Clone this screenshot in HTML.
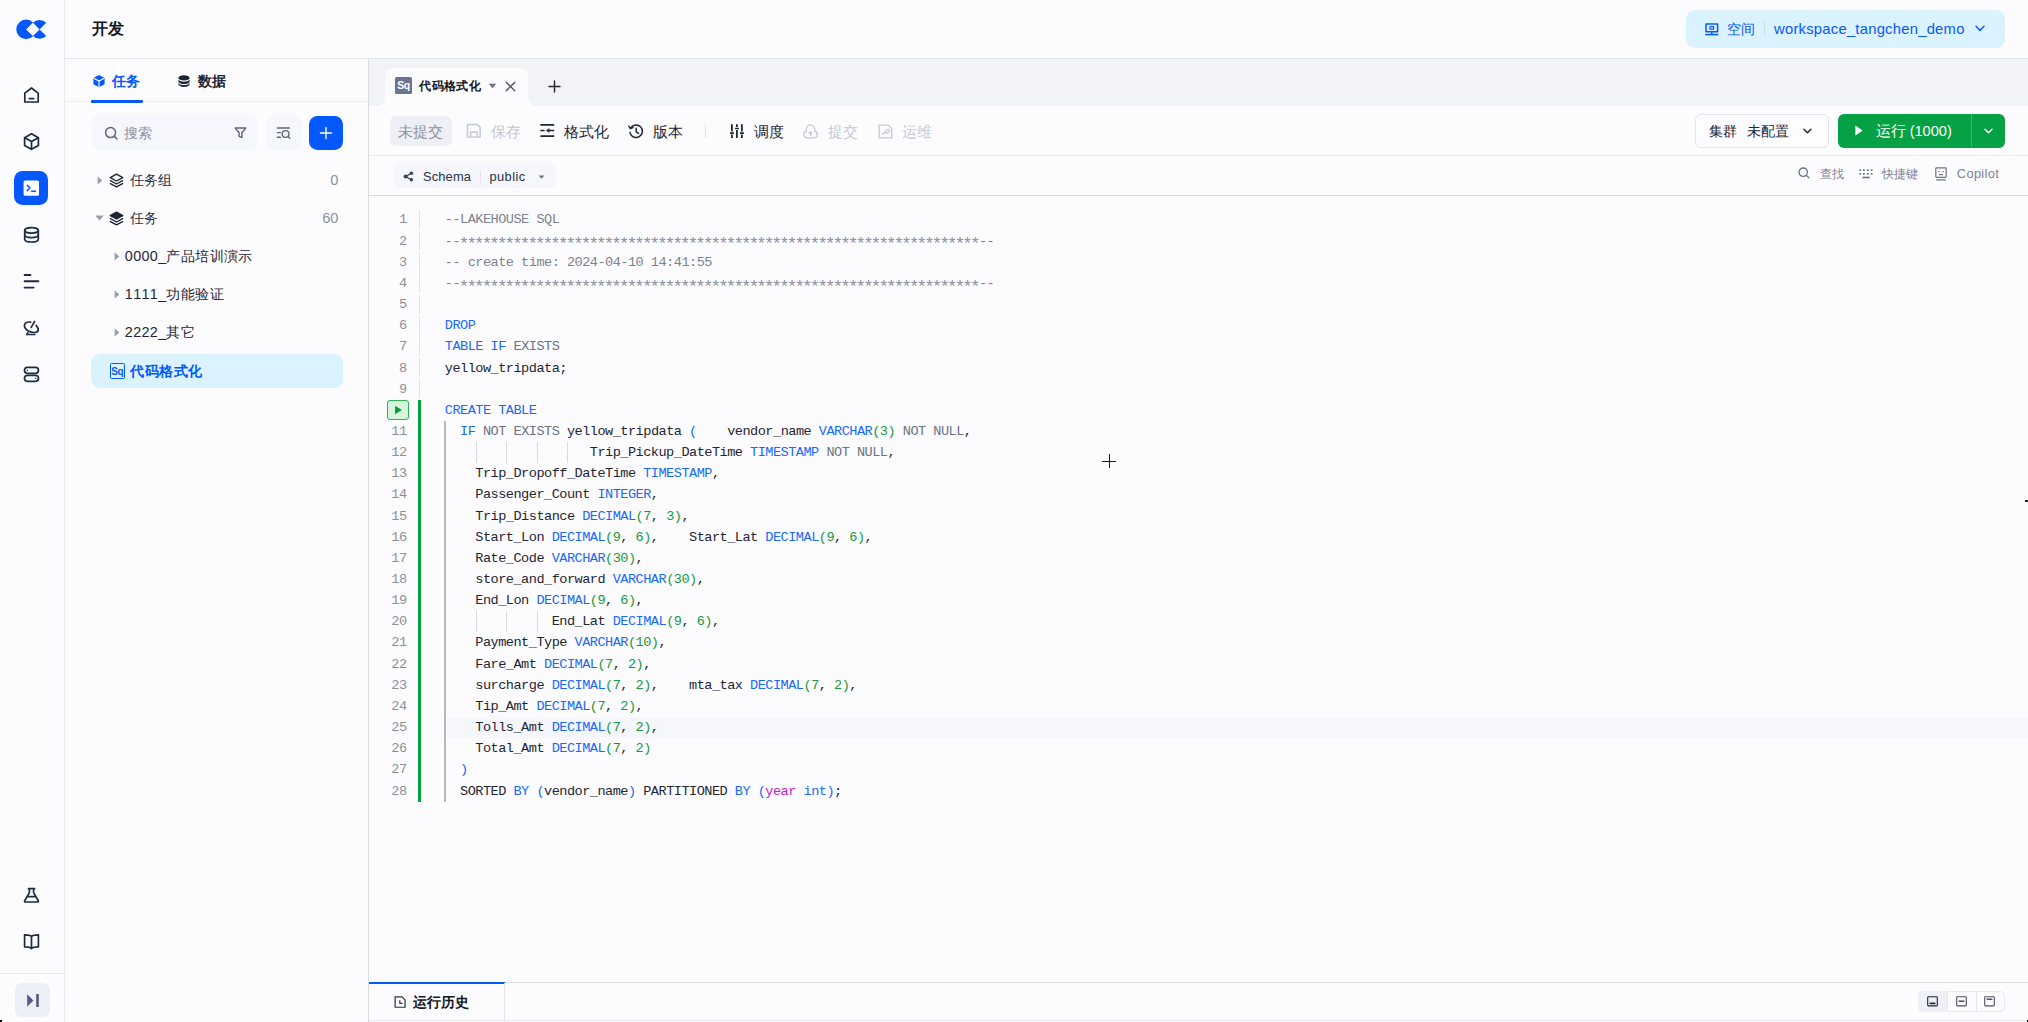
<!DOCTYPE html>
<html lang="zh">
<head>
<meta charset="utf-8">
<title>开发</title>
<style>
*{box-sizing:border-box;margin:0;padding:0}
html,body{width:2028px;height:1022px;overflow:hidden;background:#fcfcfe}
body{position:relative;font-kerning:none;font-family:"Liberation Sans",sans-serif;color:#1f2533;font-size:14.8px}
.abs{position:absolute}
.t{position:absolute;white-space:nowrap;line-height:20px;height:20px}
svg{position:absolute;overflow:visible}
.ln{position:absolute;margin-top:0.6px;left:380px;width:26.6px;text-align:right;font-family:"Liberation Mono",monospace;font-size:13.6px;letter-spacing:-0.526px;color:#8e9096;height:21.125px;line-height:21.125px}
.cl{position:absolute;margin-top:0.6px;left:444.8px;font-family:"Liberation Mono",monospace;font-size:13.6px;letter-spacing:-0.526px;white-space:pre;height:21.125px;line-height:21.125px;color:#1f2533}
.a{color:#8b919e;position:relative;margin-left:-1.3px;margin-right:1.3px;top:4.6px;font-size:17.4px;line-height:0;letter-spacing:-2.806px}.k{color:#1668ff}.c{color:#7c8290}.g{color:#6b7385}.n{color:#159a3c}.m{color:#c41cc8}
</style>
</head>
<body>
<!-- LEFT SIDEBAR -->
<div class="abs" style="left:64px;top:0;width:1px;height:1022px;background:#e6e8f2"></div>
<div class="abs" style="left:65px;top:58px;width:1963px;height:1px;background:#e3e4ea"></div>

<svg style="left:0;top:0" width="64" height="1022" viewBox="0 0 64 1022" fill="none" stroke="#1f2a44" stroke-width="1.7" stroke-linecap="round" stroke-linejoin="round">
<path d="M26.10 29.40L33.03 36.33A9.8 9.8 0 1 1 33.03 22.47ZM39.60 29.40L32.95 22.75A9.4 9.4 0 0 1 46.25 22.75ZM39.60 29.40L46.25 36.05A9.4 9.4 0 0 1 32.95 36.05Z" fill="#0558fc" stroke="none"/>
<!-- home -->
<path d="M24.8 93.2 L31.5 88 L38.2 93.2 V102 H24.8 Z"/><path d="M29.3 98.6h4.4"/>
<!-- cube -->
<path d="M31.5 133.8 L38.4 137.7 V145.4 L31.5 149.3 L24.6 145.4 V137.7 Z"/><path d="M24.8 137.8 L31.5 141.6 L38.2 137.8 M31.5 141.6 V149"/>
<!-- active terminal -->
<rect x="14" y="171" width="34" height="34" rx="8.5" fill="#0558fc" stroke="none"/>
<rect x="23.6" y="180.6" width="15.4" height="15.2" rx="1.6" fill="#fff" stroke="none"/>
<path d="M27.2 185.4 L30 188 L27.2 190.6 M31.6 191.2 H35.4" stroke="#0558fc" stroke-width="1.5"/>
<!-- database -->
<ellipse cx="31.5" cy="230.4" rx="6.8" ry="2.7"/><path d="M24.7 230.4 V239.2 C24.7 240.8 27.7 242 31.5 242 S38.3 240.8 38.3 239.2 V230.4"/><path d="M24.7 234.8 C24.7 236.4 27.7 237.6 31.5 237.6 S38.3 236.4 38.3 234.8"/>
<!-- lines -->
<path d="M24.6 275 H30.4 M24.6 281.2 H38.4 M24.6 287.6 H33.6" stroke-width="1.9"/>
<!-- dish -->
<path d="M30.6 322.2 C27 321.5 24.1 323 24.4 326 C24.8 329.7 30 332.7 35 332.5 C38.6 332.3 39.6 329.2 36.2 325.4"/><path d="M31.2 327.4 L34.6 321.4"/><path d="M26.8 334.5 H34.8 M26.8 334.5 L27.8 332.8"/>
<!-- pills -->
<rect x="24.5" y="367.3" width="14" height="6" rx="3"/><rect x="24.5" y="375.3" width="14" height="6" rx="3"/><path d="M27.2 370.3h.4 M35.4 378.3h.4" stroke-width="1.2"/>
<!-- flask -->
<path d="M28.4 888.6 H34.6 M29.4 888.8 V892.6 L24.6 901 Q24.3 902 25.4 902 H37.6 Q38.7 902 38.4 901 L33.6 892.6 V888.8 M27.2 896.6 H35.8"/>
<!-- book -->
<path d="M31.5 936.4 V948.6 M31.5 936.4 C30.2 935 27.5 934.8 24.6 934.8 V946.8 C27.5 946.8 30.2 947 31.5 948.6 C32.8 947 35.5 946.8 38.4 946.8 V934.8 C35.5 934.8 32.8 935 31.5 936.4 Z"/>
</svg>
<div class="abs" style="left:0;top:973px;width:64px;height:1px;background:#e6e8f0"></div>
<div class="abs" style="left:15px;top:983px;width:35px;height:34px;border-radius:7px;background:#eff0f7"></div>
<svg style="left:26px;top:993px" width="14" height="15" viewBox="0 0 14 15"><path d="M1.2 1.2 L7.4 7.5 L1.2 13.8 Z" fill="#555b80"/><rect x="10.2" y="1" width="2.6" height="13" fill="#555b80"/></svg>

<div class="abs" style="left:1686px;top:10px;width:319px;height:38px;border-radius:9px;background:#dbf3ff"></div>
<svg style="left:1704.8px;top:22.8px" width="14" height="13" viewBox="0 0 14 13" fill="none" stroke="#0558fc" stroke-width="1.5" stroke-linejoin="round"><path d="M1 0.9 H12.6 V8.8 H1 Z"/><path d="M5 3.5 H8.6 V6.2 H5 Z" stroke-width="1.2"/><path d="M6.8 8.8 V11.2" stroke-width="1.4"/><path d="M0.3 11.6 H13.3" stroke-width="1.5"/></svg>
<div class="t" style="left:1727px;top:19px;color:#0558fc;font-size:14.2px">空间</div>
<div class="abs" style="left:1764px;top:22px;width:1px;height:14px;background:#c9dcf5"></div>
<div class="t" style="left:1774px;top:19px;color:#0558fc;font-size:14.8px;letter-spacing:0.24px">workspace_tangchen_demo</div>
<svg style="left:1974.6px;top:25.4px" width="10" height="7" viewBox="0 0 10 7" fill="none" stroke="#0558fc" stroke-width="1.5" stroke-linecap="round" stroke-linejoin="round"><path d="M1 1.2 L5 5.4 L9 1.2"/></svg>
<div class="abs" style="left:1695px;top:114px;width:134px;height:34px;border-radius:6px;background:#fdfdff;border:1px solid #e1e3ee"></div>
<div class="t" style="left:1708.5px;top:121px;color:#1f2533;font-size:14.3px;letter-spacing:0.2px">集群</div>
<div class="t" style="left:1746.8px;top:121px;color:#1f2533;font-size:14.3px;letter-spacing:0.2px">未配置</div>
<svg style="left:1803px;top:127.6px" width="9" height="7" viewBox="0 0 9 7" fill="none" stroke="#1f2533" stroke-width="1.4" stroke-linecap="round" stroke-linejoin="round"><path d="M1 1.2 L4.5 4.8 L8 1.2"/></svg>
<div class="abs" style="left:1837.5px;top:114px;width:167.5px;height:34px;border-radius:6px;background:#05a144"></div>
<div class="abs" style="left:1971px;top:114px;width:1px;height:34px;background:#3bb866"></div>
<svg style="left:1855.4px;top:125.4px" width="8" height="11" viewBox="0 0 8 11"><path d="M0.4 0.4 L7.6 5.5 L0.4 10.6 Z" fill="#fff"/></svg>
<div class="t" style="left:1875.6px;top:121px;color:#fff;font-size:14.6px">运行 (1000)</div>
<svg style="left:1983.6px;top:127.6px" width="9" height="7" viewBox="0 0 9 7" fill="none" stroke="#fff" stroke-width="1.4" stroke-linecap="round" stroke-linejoin="round"><path d="M1 1.2 L4.5 4.8 L8 1.2"/></svg>
<svg style="left:1798.4px;top:167.4px" width="12" height="12" viewBox="0 0 12 12" fill="none" stroke="#6b7385" stroke-width="1.3" stroke-linecap="round"><circle cx="5.2" cy="5.2" r="4.2"/><path d="M8.4 8.4 L10.8 10.8"/></svg>
<div class="t" style="left:1819.6px;top:163.6px;font-size:12px;color:#7c8394">查找</div>
<svg style="left:1859.4px;top:168.6px" width="14" height="10" viewBox="0 0 14 10" fill="#6b7385"><rect x="0.3" y="0.4" width="1.8" height="1.6"/><rect x="4" y="0.4" width="1.8" height="1.6"/><rect x="7.9" y="0.4" width="1.8" height="1.6"/><rect x="11.7" y="0.4" width="1.8" height="1.6"/><rect x="0.3" y="4" width="1.8" height="1.6"/><rect x="4" y="4" width="1.8" height="1.6"/><rect x="7.9" y="4" width="1.8" height="1.6"/><rect x="11.7" y="4" width="1.8" height="1.6"/><rect x="3.4" y="7.7" width="7.2" height="1.6"/></svg>
<div class="t" style="left:1882.4px;top:163.6px;font-size:12px;color:#7c8394">快捷键</div>
<svg style="left:1935.4px;top:167px" width="12" height="14" viewBox="0 0 12 14" fill="none" stroke="#6b7385" stroke-width="1.2"><rect x="0.8" y="0.8" width="10.4" height="9.6" rx="0.8"/><path d="M3.8 4 V5.2 M8.2 4 V5.2 M4 7.6 H8 M1.2 12.8 H10.8"/></svg>
<div class="t" style="left:1956.8px;top:163.6px;font-size:12.9px;letter-spacing:0.3px;color:#7c8394">Copilot</div>
<div class="t" style="left:91.6px;top:18.3px;font-size:16.2px;font-weight:bold;color:#14171f">开发</div>

<div class="abs" style="left:368px;top:59px;width:1px;height:963px;background:#dcdde3"></div>
<div class="abs" style="left:65px;top:101px;width:303px;height:1px;background:#eceef5"></div>
<div class="abs" style="left:91px;top:100px;width:52px;height:2.6px;background:#0558fc;border-radius:1px"></div>
<svg style="left:92px;top:74px" width="14" height="14" viewBox="0 0 14 14"><path d="M7 0.9 L12.6 4 V10.2 L7 13.3 L1.4 10.2 V4 Z" fill="#0558fc"/><path d="M1.8 4.2 L7 7.1 L12.2 4.2 M7 7.1 V13" stroke="#fcfcfe" stroke-width="1.1" fill="none"/></svg>
<div class="t" style="left:112px;top:71px;font-weight:bold;color:#0558fc;font-size:14.4px">任务</div>
<svg style="left:177px;top:74px" width="14" height="14" viewBox="0 0 14 14" fill="#1f2533"><ellipse cx="7" cy="3.9" rx="5.6" ry="2.7"/><path d="M1.4 5.6 C2.4 7.2 4.6 7.7 7 7.7 S11.6 7.2 12.6 5.6 V7.4 C12.6 8.9 10.1 10 7 10 S1.4 8.9 1.4 7.4 Z"/><path d="M1.4 8.9 C2.4 10.5 4.6 11 7 11 S11.6 10.5 12.6 8.9 V10.3 C12.6 11.8 10.1 12.9 7 12.9 S1.4 11.8 1.4 10.3 Z"/></svg>
<div class="t" style="left:197.5px;top:71px;font-weight:bold;color:#1f2533;font-size:14.4px">数据</div>
<!-- search -->
<div class="abs" style="left:92px;top:115px;width:165px;height:35px;border-radius:7px;background:#f6f7fd"></div>
<svg style="left:104px;top:126px" width="15" height="15" viewBox="0 0 15 15" fill="none" stroke="#5f6678" stroke-width="1.5" stroke-linecap="round"><circle cx="6.6" cy="6.6" r="5"/><path d="M10.4 10.4 L13 13"/></svg>
<div class="t" style="left:123.5px;top:123px;color:#8b91a0;font-size:13.9px">搜索</div>
<svg style="left:234px;top:127px" width="13" height="12" viewBox="0 0 13 12" fill="none" stroke="#5f6678" stroke-width="1.4" stroke-linejoin="round"><path d="M1.2 1 H11.8 L7.9 5.8 V10.6 L5.1 9.4 V5.8 Z"/></svg>
<div class="abs" style="left:267px;top:115px;width:34px;height:35px;border-radius:7px;background:#f6f7fd"></div>
<svg style="left:276px;top:126px" width="16" height="14" viewBox="0 0 16 14" fill="none" stroke="#5f6678" stroke-width="1.4" stroke-linecap="round"><path d="M1.4 2 H13.4 M1.4 6.6 H4.4 M1.4 11.2 H4.4"/><circle cx="9.6" cy="8" r="3.4"/><path d="M12.2 10.6 L13.8 12.2"/></svg>
<div class="abs" style="left:309px;top:116px;width:34px;height:34px;border-radius:8.5px;background:#0558fc"></div>
<svg style="left:319px;top:126px" width="14" height="14" viewBox="0 0 14 14" stroke="#fff" stroke-width="1.4" stroke-linecap="round"><path d="M7 1.4 V12.6 M1.4 7 H12.6"/></svg>
<!-- tree -->
<svg style="left:96px;top:175px" width="8" height="11" viewBox="0 0 8 11"><path d="M1.6 1.4 L6.4 5.5 L1.6 9.6 Z" fill="#9a9ea8"/></svg>
<svg style="left:109px;top:173px" width="15" height="15" viewBox="0 0 15 15" fill="none" stroke="#1f2533" stroke-width="1.4" stroke-linejoin="round" stroke-linecap="round"><path d="M7.5 1.2 L13.8 4.6 L7.5 8 L1.2 4.6 Z"/><path d="M1.4 7.7 L7.5 11 L13.6 7.7 M1.4 10.6 L7.5 13.9 L13.6 10.6"/></svg>
<div class="t" style="left:129.5px;top:169.9px;color:#2a3040;font-size:14.35px">任务组</div>
<div class="t" style="left:300px;top:170.0px;width:38.5px;text-align:right;color:#8b91a0;font-size:14.7px">0</div>
<svg style="left:94px;top:214px" width="11" height="8" viewBox="0 0 11 8"><path d="M1.4 1.6 L5.5 6.4 L9.6 1.6 Z" fill="#9a9ea8"/></svg>
<svg style="left:109px;top:211px" width="15" height="15" viewBox="0 0 15 15" fill="none" stroke="#1f2533" stroke-width="1.4" stroke-linejoin="round" stroke-linecap="round"><path d="M7.5 1.2 L13.8 4.6 L7.5 8 L1.2 4.6 Z" fill="#1f2533"/><path d="M1.4 7.7 L7.5 11 L13.6 7.7 M1.4 10.6 L7.5 13.9 L13.6 10.6"/></svg>
<div class="t" style="left:129.5px;top:207.9px;color:#2a3040;font-size:14.35px">任务</div>
<div class="t" style="left:300px;top:208.0px;width:38.5px;text-align:right;color:#8b91a0;font-size:14.7px">60</div>
<svg style="left:112.5px;top:251px" width="8" height="11" viewBox="0 0 8 11"><path d="M1.6 1.4 L6.4 5.5 L1.6 9.6 Z" fill="#9a9ea8"/></svg>
<div class="t" style="left:124.8px;top:245.9px;color:#1f2533;letter-spacing:0.36px;font-size:14.35px">0000_产品培训演示</div>
<svg style="left:112.5px;top:289px" width="8" height="11" viewBox="0 0 8 11"><path d="M1.6 1.4 L6.4 5.5 L1.6 9.6 Z" fill="#9a9ea8"/></svg>
<div class="t" style="left:124.8px;top:283.9px;color:#1f2533;letter-spacing:0.36px;font-size:14.35px">1111_功能验证</div>
<svg style="left:112.5px;top:327px" width="8" height="11" viewBox="0 0 8 11"><path d="M1.6 1.4 L6.4 5.5 L1.6 9.6 Z" fill="#9a9ea8"/></svg>
<div class="t" style="left:124.8px;top:321.9px;color:#1f2533;letter-spacing:0.36px;font-size:14.35px">2222_其它</div>
<div class="abs" style="left:91.4px;top:354px;width:252px;height:34px;border-radius:8.5px;background:#dbf3ff"></div>
<div class="abs" style="left:109.5px;top:363.4px;width:15.6px;height:15.2px;border:1.9px solid #0558fc;border-radius:1.5px;color:#0558fc;font-size:10px;font-weight:bold;line-height:12.6px;padding-top:1.3px;text-align:center;letter-spacing:-0.3px">Sq</div>
<div class="t" style="left:130.2px;top:360.5px;color:#0558fc;font-weight:bold;letter-spacing:0.45px;font-size:14.25px">代码格式化</div>

<div class="abs" style="left:369px;top:59px;width:1659px;height:46.5px;background:#f1f3f7"></div>
<div class="abs" style="left:385px;top:68.4px;width:142.5px;height:37.2px;background:#fcfcfe;border-radius:8px 8px 0 0"></div>
<svg style="left:377px;top:97.6px" width="8" height="8" viewBox="0 0 8 8"><path d="M8 0 V8 H0 A8 8 0 0 0 8 0Z" fill="#fcfcfe"/></svg>
<svg style="left:527.5px;top:97.6px" width="8" height="8" viewBox="0 0 8 8"><path d="M0 0 V8 H8 A8 8 0 0 1 0 0Z" fill="#fcfcfe"/></svg>
<div class="abs" style="left:395px;top:77.2px;width:17px;height:17px;border-radius:1.5px;background:#6c7390;color:#fff;font-size:10.4px;font-weight:bold;line-height:16px;padding-top:1.2px;text-align:center;letter-spacing:-0.3px">Sq</div>
<div class="t" style="left:419.2px;top:76px;font-size:12.3px;letter-spacing:0.36px;font-weight:bold;color:#14171f">代码格式化</div>
<svg style="left:488px;top:82.5px" width="9" height="6" viewBox="0 0 9 6"><path d="M0.8 0.8 H8.2 L4.5 5.2 Z" fill="#6b7385"/></svg>
<svg style="left:504.5px;top:81px" width="11" height="11" viewBox="0 0 11 11" stroke="#4a5163" stroke-width="1.3" stroke-linecap="round"><path d="M1.2 1.2 L9.8 9.8 M9.8 1.2 L1.2 9.8"/></svg>
<svg style="left:548px;top:80px" width="13" height="13" viewBox="0 0 13 13" stroke="#1f2533" stroke-width="1.4" stroke-linecap="round"><path d="M6.5 1 V12 M1 6.5 H12"/></svg>
<div class="abs" style="left:390px;top:116px;width:61.5px;height:29.5px;border-radius:6px;background:#eff0f7"></div>
<div class="t" style="left:398.2px;top:121.8px;font-size:14.55px;color:#8b909c">未提交</div>
<svg style="left:465.6px;top:123.2px" width="15.6" height="15.6" viewBox="0 0 15 15" fill="none" stroke="#c4c8d4" stroke-width="1.4" stroke-linejoin="round"><path d="M1.4 1.4 H10.8 L13.6 4.2 V13.6 H1.4 Z"/><path d="M4.4 13.4 V8.6 H10.6 V13.4"/></svg>
<div class="t" style="left:490.6px;top:121.8px;font-size:14.55px;color:#c4c8d4">保存</div>
<svg style="left:539.8px;top:123.4px" width="15" height="15" viewBox="0 0 15 15" fill="none" stroke="#1f2533" stroke-width="1.7"><path d="M0.4 1.8 H14.2 M0.4 13.2 H14.2 M0.4 7.5 H4.6 M9 7.5 H14.2"/><path d="M6 7.5 L9.4 4.9 V10.1 Z" fill="#1f2533" stroke="none"/></svg>
<div class="t" style="left:564.4px;top:121.8px;font-size:14.55px;color:#1f2533">格式化</div>
<svg style="left:628.2px;top:123.6px" width="16" height="15" viewBox="0 0 16 15" fill="none" stroke="#1f2533" stroke-width="1.5" stroke-linecap="round" stroke-linejoin="round"><path d="M2.6 4.2 A6.3 6.3 0 1 1 2 8.6"/><path d="M0.9 2.2 L2.4 4.6 L5 3.6"/><path d="M8.2 4.2 V7.8 L10.6 9.4"/></svg>
<div class="t" style="left:653.2px;top:121.8px;font-size:14.55px;color:#1f2533">版本</div>
<div class="abs" style="left:705px;top:125px;width:1px;height:12.5px;background:#dfe2ee"></div>
<svg style="left:729.8px;top:123.8px" width="15" height="15" viewBox="0 0 15 15" fill="none" stroke="#1f2533" stroke-width="1.8"><path d="M1.9 0.2 V7.6 M1.9 10.6 V14 M6.9 0.2 V3 M6.9 6 V14 M11.9 0.2 V7.6 M11.9 10.6 V14"/><path d="M0 9.1 H3.9 M5 4.5 H8.9 M10 9.1 H13.9" stroke-width="1.6"/></svg>
<div class="t" style="left:754px;top:121.8px;font-size:14.55px;color:#1f2533">调度</div>
<svg style="left:803.4px;top:123.6px" width="15" height="15" viewBox="0 0 15 15" fill="none" stroke="#c4c8d4" stroke-width="1.3" stroke-linecap="round" stroke-linejoin="round"><path d="M4 13.8 C2 13.8 0.7 12.4 0.7 10.6 C0.7 9 1.7 7.8 3.1 7.4 C3.1 3.6 4.9 0.9 7.5 0.9 S11.9 3.6 11.9 7.4 C13.3 7.8 14.3 9 14.3 10.6 C14.3 12.4 13 13.8 11 13.8 Z"/><path d="M7.5 11.6 V7.8 M6 9.2 L7.5 7.6 L9 9.2"/></svg>
<div class="t" style="left:828.2px;top:121.8px;font-size:14.55px;color:#c4c8d4">提交</div>
<svg style="left:878px;top:123.7px" width="15" height="15" viewBox="0 0 15 15" fill="none" stroke="#c4c8d4" stroke-width="1.3" stroke-linejoin="round" stroke-linecap="round"><path d="M1.2 1.2 H10.4 L13.8 4.6 V13.8 H1.2 Z"/><path d="M4.6 10.4 L7.6 7.4 M7.4 7.6 A2 2 0 1 0 9.8 5.2 L8.6 6.4 L7.4 7.6"/></svg>
<div class="t" style="left:902.2px;top:121.8px;font-size:14.55px;color:#c4c8d4">运维</div>
<div class="abs" style="left:369px;top:155px;width:1659px;height:1px;background:#eceef5"></div>
<div class="abs" style="left:394px;top:163.4px;width:161.5px;height:25px;border-radius:5px;background:#f6f7fd"></div>
<svg style="left:403px;top:171px" width="11" height="11" viewBox="0 0 11 11" fill="#3a4154"><circle cx="2.6" cy="5.5" r="2"/><circle cx="8.4" cy="2.2" r="1.7"/><circle cx="8.4" cy="8.8" r="1.7"/><path d="M2.6 5.5 L8.4 2.2 M2.6 5.5 L8.4 8.8" stroke="#3a4154" stroke-width="1.3"/></svg>
<div class="t" style="left:423px;top:166.6px;font-size:12.9px;letter-spacing:0.13px;color:#2a3040">Schema</div>
<div class="abs" style="left:480px;top:170.5px;width:1px;height:12px;background:#dfe2ee"></div>
<div class="t" style="left:489.4px;top:166.6px;font-size:12.9px;letter-spacing:0.42px;color:#2a3040">public</div>
<svg style="left:537.6px;top:175px" width="7" height="4" viewBox="0 0 7 4"><path d="M0.6 0.4 H6.4 L3.5 3.8 Z" fill="#6b7385"/></svg>
<div class="abs" style="left:369px;top:195px;width:1659px;height:1px;background:#dcdde3"></div>
<!-- ED-START -->
<div class="abs" style="left:447px;top:716.90px;width:1581px;height:21.15px;background:#f6f7fd"></div>
<div class="abs" style="left:419px;top:209.90px;width:1.2px;height:19px;background:#dfe2f7"></div>
<div class="abs" style="left:419px;top:231.05px;width:1.2px;height:19px;background:#dfe2f7"></div>
<div class="abs" style="left:419px;top:252.20px;width:1.2px;height:19px;background:#dfe2f7"></div>
<div class="abs" style="left:419px;top:273.35px;width:1.2px;height:19px;background:#dfe2f7"></div>
<div class="abs" style="left:419px;top:294.50px;width:1.2px;height:19px;background:#dfe2f7"></div>
<div class="abs" style="left:419px;top:315.65px;width:1.2px;height:19px;background:#dfe2f7"></div>
<div class="abs" style="left:419px;top:336.80px;width:1.2px;height:19px;background:#dfe2f7"></div>
<div class="abs" style="left:419px;top:357.95px;width:1.2px;height:19px;background:#dfe2f7"></div>
<div class="abs" style="left:419px;top:379.10px;width:1.2px;height:19px;background:#dfe2f7"></div>
<div class="abs" style="left:418px;top:399.55px;width:3.1px;height:402.35px;background:#05a63c"></div>
<div class="abs" style="left:444.2px;top:420.70px;width:1.8px;height:381.20px;background:#b9b9bb"></div>
<div class="abs" style="left:475.5px;top:441.55px;width:1px;height:21.15px;background:#d9d9dd"></div>
<div class="abs" style="left:506.1px;top:441.55px;width:1px;height:21.15px;background:#d9d9dd"></div>
<div class="abs" style="left:536.6px;top:441.55px;width:1px;height:21.15px;background:#d9d9dd"></div>
<div class="abs" style="left:567.2px;top:441.55px;width:1px;height:21.15px;background:#d9d9dd"></div>
<div class="abs" style="left:475.5px;top:610.75px;width:1px;height:21.15px;background:#d9d9dd"></div>
<div class="abs" style="left:506.1px;top:610.75px;width:1px;height:21.15px;background:#d9d9dd"></div>
<div class="abs" style="left:536.6px;top:610.75px;width:1px;height:21.15px;background:#d9d9dd"></div>
<div class="abs" style="left:387px;top:399.65px;width:22px;height:20.8px;border:1.6px solid #2fb155;border-radius:3px;background:#d5f5dc"></div>
<svg style="left:394px;top:405.15px" width="9" height="10" viewBox="0 0 9 10"><path d="M1 0.8 L8 5 L1 9.2 Z" fill="#0d9e3f"/></svg>
<div class="ln" style="top:208.90px">1</div>
<div class="cl" style="top:208.90px"><span class="c">--LAKEHOUSE SQL</span></div>
<div class="ln" style="top:230.05px">2</div>
<div class="cl" style="top:230.05px"><span class="c">--<span class="a">********************************************************************</span>--</span></div>
<div class="ln" style="top:251.20px">3</div>
<div class="cl" style="top:251.20px"><span class="c">-- create time: 2024-04-10 14:41:55</span></div>
<div class="ln" style="top:272.35px">4</div>
<div class="cl" style="top:272.35px"><span class="c">--<span class="a">********************************************************************</span>--</span></div>
<div class="ln" style="top:293.50px">5</div>
<div class="ln" style="top:314.65px">6</div>
<div class="cl" style="top:314.65px"><span class="k">DROP</span></div>
<div class="ln" style="top:335.80px">7</div>
<div class="cl" style="top:335.80px"><span class="k">TABLE IF</span> <span class="g">EXISTS</span></div>
<div class="ln" style="top:356.95px">8</div>
<div class="cl" style="top:356.95px">yellow_tripdata;</div>
<div class="ln" style="top:378.10px">9</div>
<div class="cl" style="top:399.25px"><span class="k">CREATE TABLE</span></div>
<div class="ln" style="top:420.40px">11</div>
<div class="cl" style="top:420.40px">  <span class="k">IF</span> <span class="g">NOT EXISTS</span> yellow_tripdata <span class="k">(</span>    vendor_name <span class="k">VARCHAR</span><span class="n">(3)</span> <span class="g">NOT NULL</span>,</div>
<div class="ln" style="top:441.55px">12</div>
<div class="cl" style="top:441.55px">                   Trip_Pickup_DateTime <span class="k">TIMESTAMP</span> <span class="g">NOT NULL</span>,</div>
<div class="ln" style="top:462.70px">13</div>
<div class="cl" style="top:462.70px">    Trip_Dropoff_DateTime <span class="k">TIMESTAMP</span>,</div>
<div class="ln" style="top:483.85px">14</div>
<div class="cl" style="top:483.85px">    Passenger_Count <span class="k">INTEGER</span>,</div>
<div class="ln" style="top:505.00px">15</div>
<div class="cl" style="top:505.00px">    Trip_Distance <span class="k">DECIMAL</span><span class="n">(7</span>, <span class="n">3)</span>,</div>
<div class="ln" style="top:526.15px">16</div>
<div class="cl" style="top:526.15px">    Start_Lon <span class="k">DECIMAL</span><span class="n">(9</span>, <span class="n">6)</span>,    Start_Lat <span class="k">DECIMAL</span><span class="n">(9</span>, <span class="n">6)</span>,</div>
<div class="ln" style="top:547.30px">17</div>
<div class="cl" style="top:547.30px">    Rate_Code <span class="k">VARCHAR</span><span class="n">(30)</span>,</div>
<div class="ln" style="top:568.45px">18</div>
<div class="cl" style="top:568.45px">    store_and_forward <span class="k">VARCHAR</span><span class="n">(30)</span>,</div>
<div class="ln" style="top:589.60px">19</div>
<div class="cl" style="top:589.60px">    End_Lon <span class="k">DECIMAL</span><span class="n">(9</span>, <span class="n">6)</span>,</div>
<div class="ln" style="top:610.75px">20</div>
<div class="cl" style="top:610.75px">              End_Lat <span class="k">DECIMAL</span><span class="n">(9</span>, <span class="n">6)</span>,</div>
<div class="ln" style="top:631.90px">21</div>
<div class="cl" style="top:631.90px">    Payment_Type <span class="k">VARCHAR</span><span class="n">(10)</span>,</div>
<div class="ln" style="top:653.05px">22</div>
<div class="cl" style="top:653.05px">    Fare_Amt <span class="k">DECIMAL</span><span class="n">(7</span>, <span class="n">2)</span>,</div>
<div class="ln" style="top:674.20px">23</div>
<div class="cl" style="top:674.20px">    surcharge <span class="k">DECIMAL</span><span class="n">(7</span>, <span class="n">2)</span>,    mta_tax <span class="k">DECIMAL</span><span class="n">(7</span>, <span class="n">2)</span>,</div>
<div class="ln" style="top:695.35px">24</div>
<div class="cl" style="top:695.35px">    Tip_Amt <span class="k">DECIMAL</span><span class="n">(7</span>, <span class="n">2)</span>,</div>
<div class="ln" style="top:716.50px">25</div>
<div class="cl" style="top:716.50px">    Tolls_Amt <span class="k">DECIMAL</span><span class="n">(7</span>, <span class="n">2)</span>,</div>
<div class="ln" style="top:737.65px">26</div>
<div class="cl" style="top:737.65px">    Total_Amt <span class="k">DECIMAL</span><span class="n">(7</span>, <span class="n">2)</span></div>
<div class="ln" style="top:758.80px">27</div>
<div class="cl" style="top:758.80px">  <span class="k">)</span></div>
<div class="ln" style="top:779.95px">28</div>
<div class="cl" style="top:779.95px">  SORTED <span class="k">BY (</span>vendor_name<span class="k">)</span> PARTITIONED <span class="k">BY (</span><span class="m">year</span> <span class="k">int)</span>;</div>
<!-- ED-END -->
<div class="abs" style="left:1102px;top:460.9px;width:14px;height:1.3px;background:#15151c;box-shadow:0 0 0 1px #fff"></div><div class="abs" style="left:1108.9px;top:454px;width:1.3px;height:14px;background:#15151c;box-shadow:0 0 0 1px #fff"></div><div class="abs" style="left:1102px;top:460.9px;width:14px;height:1.3px;background:#15151c"></div>
<div class="abs" style="left:369px;top:982px;width:1659px;height:1px;background:#dcdde3"></div>
<div class="abs" style="left:369px;top:981.8px;width:135.5px;height:2px;background:#0558fc"></div>
<div class="abs" style="left:504px;top:983px;width:1px;height:38px;background:#e3e4ea"></div>
<div class="abs" style="left:369px;top:1020px;width:1659px;height:1px;background:#e9ebf5"></div>
<svg style="left:394px;top:996px" width="12.2" height="12.2" viewBox="0 0 13 13" fill="none" stroke="#2a3040" stroke-width="1.3" stroke-linejoin="round" stroke-linecap="round"><path d="M1.2 1 H8.6 L11.8 4.2 V12 H1.2 Z"/><path d="M6.2 5 V7.8 H8.6"/></svg>
<div class="t" style="left:412.6px;top:992px;font-size:14.3px;letter-spacing:0.3px;font-weight:bold;color:#14171f">运行历史</div>
<div class="abs" style="left:1918px;top:990.5px;width:87px;height:21px;border-radius:5px;border:1px solid #e6e8f4"></div>
<div class="abs" style="left:1918px;top:990.5px;width:29.5px;height:21px;border-radius:5px 0 0 5px;background:#eff0f7"></div>
<div class="abs" style="left:1947px;top:991px;width:1px;height:20px;background:#e3e6f6"></div>
<div class="abs" style="left:1975.5px;top:991px;width:1px;height:20px;background:#e3e6f6"></div>
<svg style="left:1927px;top:995.6px" width="11" height="11" viewBox="0 0 11 11" fill="none" stroke="#1f2533" stroke-width="1.1"><rect x="0.7" y="0.7" width="9.6" height="9.2" rx="0.8"/><path d="M2.6 7.4 H8.4" stroke-width="1.7"/></svg>
<svg style="left:1955.8px;top:995.6px" width="11" height="11" viewBox="0 0 11 11" fill="none" stroke="#4a5163" stroke-width="1.1"><rect x="0.7" y="0.7" width="9.6" height="9.2" rx="0.8"/><path d="M2.6 5.2 H8.4" stroke-width="1.5"/></svg>
<svg style="left:1984.4px;top:995.6px" width="11" height="11" viewBox="0 0 11 11" fill="none" stroke="#4a5163" stroke-width="1.1"><rect x="0.7" y="0.7" width="9.6" height="9.2" rx="0.8"/><path d="M2.6 3.2 H8.4" stroke-width="1.5"/></svg>
<div class="abs" style="left:2025px;top:500px;width:3px;height:2px;background:#22242e"></div>
<div class="abs" style="left:0;top:1020px;width:1.5px;height:2px;background:#000"></div>
<div class="abs" style="left:2026.5px;top:1020px;width:1.5px;height:2px;background:#000"></div>
</body>
</html>
